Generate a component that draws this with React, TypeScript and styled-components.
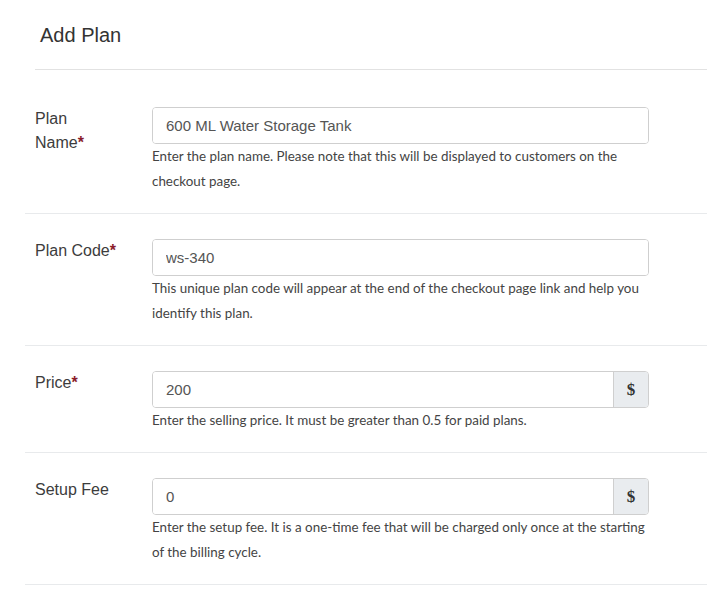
import React from "react";
import styled, { createGlobalStyle } from "styled-components";

const GlobalStyle = createGlobalStyle`
  html, body {
    margin: 0;
    padding: 0;
    background: #ffffff;
  }
  body {
    font-family: "Liberation Sans", Arial, sans-serif;
    color: #333;
  }
`;

const Page = styled.div`
  width: 726px;
  padding: 0 19px 0 25px;
  box-sizing: border-box;
`;

const Header = styled.div`
  margin-left: 10px;
  padding: 23px 0 22px 5px;
  border-bottom: 1px solid #e2e2e2;
  margin-bottom: 12px;
`;

const Title = styled.h3`
  margin: 0;
  font-size: 20px;
  font-weight: 400;
  line-height: 24px;
  color: #333;
`;

const Row = styled.div`
  display: flex;
  padding: 25px 0 19px 10px;
  border-bottom: 1px solid #e8eaec;
`;

const Label = styled.label`
  width: 117px;
  flex-shrink: 0;
  padding-right: 34px;
  box-sizing: border-box;
  font-size: 16px;
  line-height: 24px;
  color: #3c3c3c;
`;

const Required = styled.span`
  color: #8b1c2a;
  font-weight: 700;
`;

const Field = styled.div`
  width: 497px;
`;

const InputGroup = styled.div`
  display: flex;
  height: 37px;
  border: 1px solid #cfcfcf;
  border-radius: 4px;
  box-sizing: border-box;
  overflow: hidden;
`;

const Input = styled.input`
  flex: 1;
  min-width: 0;
  border: none;
  outline: none;
  padding: 0 13px;
  font-family: "Liberation Sans", Arial, sans-serif;
  font-size: 15px;
  color: #555;
  background: #fff;
`;

const Addon = styled.span`
  width: 34px;
  display: flex;
  align-items: center;
  justify-content: center;
  background: #e9ecef;
  border-left: 1px solid #cfcfcf;
  font-family: "Liberation Serif", "Times New Roman", serif;
  font-weight: 700;
  font-size: 17px;
  color: #333;
`;

const Help = styled.p`
  margin: 0;
  font-family: Lato, "Open Sans", sans-serif;
  font-size: 13.4px;
  line-height: 25px;
  color: #444;
`;

type FieldRowProps = {
  label: React.ReactNode;
  required?: boolean;
  value: string;
  addon?: string;
  help: string;
};

const FieldRow = ({ label, required, value, addon, help }: FieldRowProps) => (
  <Row>
    <Label>
      {label}
      {required && <Required>*</Required>}
    </Label>
    <Field>
      <InputGroup>
        <Input defaultValue={value} />
        {addon && <Addon>{addon}</Addon>}
      </InputGroup>
      <Help>{help}</Help>
    </Field>
  </Row>
);

export default function App() {
  return (
    <>
      <GlobalStyle />
      <Page>
        <Header>
          <Title>Add Plan</Title>
        </Header>
        <FieldRow
          label="Plan Name"
          required
          value="600 ML Water Storage Tank"
          help="Enter the plan name. Please note that this will be displayed to customers on the checkout page."
        />
        <FieldRow
          label="Plan Code"
          required
          value="ws-340"
          help="This unique plan code will appear at the end of the checkout page link and help you identify this plan."
        />
        <FieldRow
          label="Price"
          required
          value="200"
          addon="$"
          help="Enter the selling price. It must be greater than 0.5 for paid plans."
        />
        <FieldRow
          label="Setup Fee"
          value="0"
          addon="$"
          help="Enter the setup fee. It is a one-time fee that will be charged only once at the starting of the billing cycle."
        />
      </Page>
    </>
  );
}
